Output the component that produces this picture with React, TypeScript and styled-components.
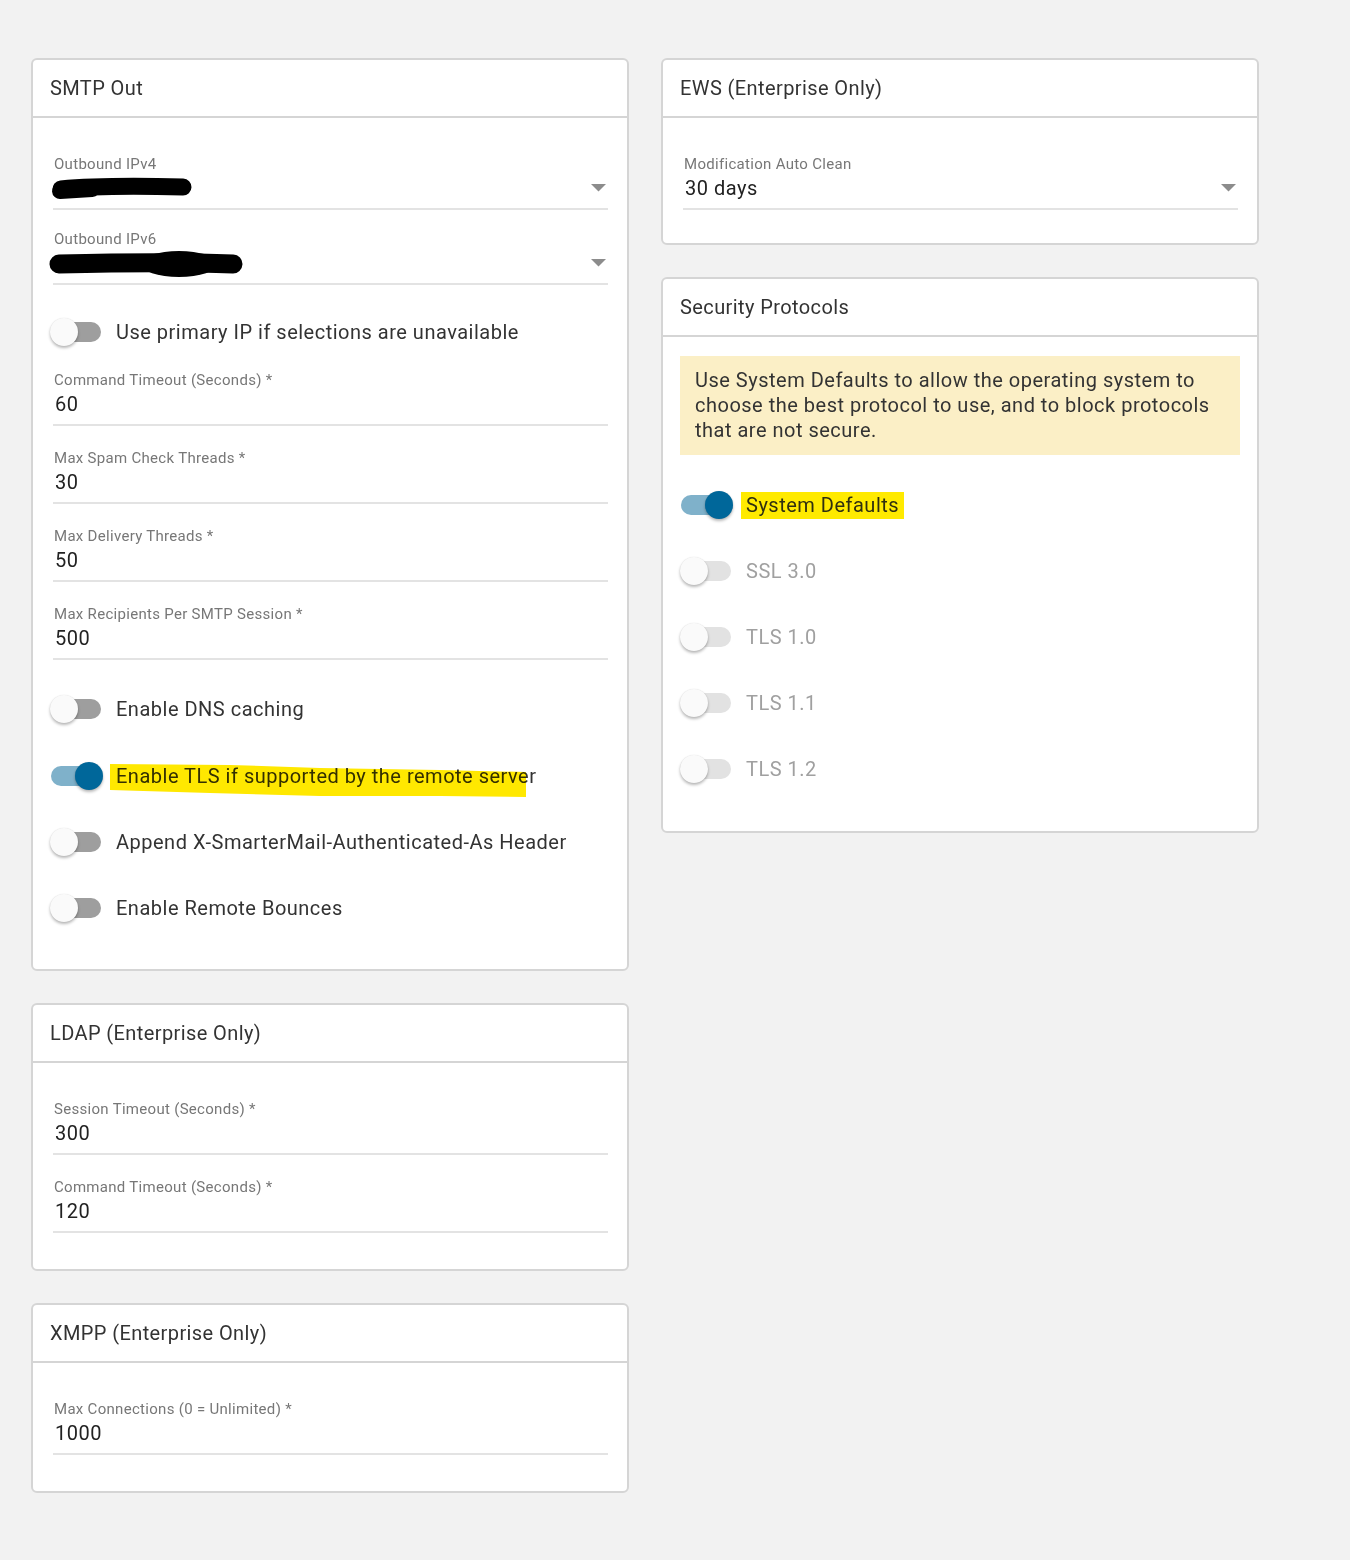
import React from "react";
import styled, { createGlobalStyle } from "styled-components";

const GlobalStyle = createGlobalStyle`
  html, body {
    margin: 0;
    padding: 0;
    background: #f2f2f2;
  }
  body {
    font-family: Roboto, "Noto Sans", "Liberation Sans", sans-serif;
    letter-spacing: 0.5px;
    color: #333;
  }
  * { box-sizing: border-box; }
`;

const Page = styled.div`
  min-height: 1560px;
  display: flex;
  align-items: flex-start;
  gap: 32px;
  padding: 58px 0 0 31px;
`;

const Column = styled.div`
  width: 598px;
  display: flex;
  flex-direction: column;
  gap: 32px;
`;

const Card = styled.section`
  background: #fff;
  border: 2px solid #d5d5d5;
  border-radius: 6px;
  overflow: hidden;
`;

const CardHeader = styled.header`
  height: 58px;
  padding: 0 17px;
  display: flex;
  align-items: center;
  border-bottom: 2px solid #d5d5d5;
  font-size: 20px;
  letter-spacing: 0.4px;
  color: #333;
`;

const CardBody = styled.div<{ $pt?: number; $pb: number }>`
  padding: ${(p) => p.$pt ?? 14}px 17px ${(p) => p.$pb}px;
  display: flex;
  flex-direction: column;
`;

const Field = styled.div<{ $mt: number }>`
  margin: ${(p) => p.$mt}px 2px 0 3px;
  padding-bottom: 7px;
  border-bottom: 2px solid #e3e3e3;
`;

const FieldLabel = styled.div`
  font-size: 15px;
  line-height: 20px;
  letter-spacing: 0.3px;
  color: #777;
  padding-left: 1px;
  padding-top: 1px;
  margin-bottom: -1px;
`;

const FieldValue = styled.div`
  height: 28px;
  font-size: 20px;
  line-height: 28px;
  color: #222;
  padding-left: 2px;
  padding-top: 1px;
  display: flex;
  align-items: center;
  justify-content: space-between;
  position: relative;
`;

const Caret = styled.svg`
  width: 15px;
  height: 8px;
  margin-right: 2px;
  margin-top: 1px;
  fill: #8c8c8c;
  flex-shrink: 0;
`;

const Scribble = styled.svg<{ $left: number; $top: number }>`
  position: absolute;
  left: ${(p) => p.$left}px;
  top: ${(p) => p.$top}px;
  overflow: visible;
`;

const ToggleRow = styled.div<{ $mt: number; $disabled?: boolean }>`
  margin-top: ${(p) => p.$mt}px;
  height: 40px;
  padding-left: 1px;
  display: flex;
  align-items: center;
  font-size: 20px;
  line-height: 28px;
  color: ${(p) => (p.$disabled ? "#a0a0a0" : "#333")};
`;

const Track = styled.span<{ $on?: boolean; $disabled?: boolean }>`
  position: relative;
  width: 50px;
  height: 20px;
  border-radius: 10px;
  flex-shrink: 0;
  background: ${(p) => (p.$on ? "#7fb1ca" : p.$disabled ? "#e2e2e2" : "#9e9e9e")};
  margin-right: 15px;
`;

const Thumb = styled.span<{ $on?: boolean }>`
  position: absolute;
  top: -4px;
  left: ${(p) => (p.$on ? 24 : -1)}px;
  width: 28px;
  height: 28px;
  border-radius: 50%;
  background: ${(p) => (p.$on ? "#00679a" : "#fafafa")};
  box-shadow: 0 2px 3px rgba(0, 0, 0, 0.28), 0 0 1px rgba(0, 0, 0, 0.12);
`;

const Marked = styled.span`
  position: relative;
  display: inline-block;
`;

const MarkerSvg = styled.svg`
  position: absolute;
  left: -6px;
  top: 0;
  overflow: visible;
  mix-blend-mode: multiply;
  pointer-events: none;
`;

const Highlight = styled.span`
  display: inline-block;
  background: #ffea00;
  line-height: 27px;
  padding: 0 5px;
  margin-left: -5px;
  color: #2f2f10;
`;

const InfoBox = styled.div`
  background: #fbefc6;
  padding: 12px 15px;
  font-size: 20px;
  line-height: 25px;
  color: #333;
`;

const CaretIcon = () => (
  <Caret viewBox="0 0 15 8">
    <polygon points="0,0 15,0 7.5,7.5" />
  </Caret>
);

type FieldProps = {
  label: string;
  value?: React.ReactNode;
  mt: number;
  select?: boolean;
};

const TextField = ({ label, value, mt, select }: FieldProps) => (
  <Field $mt={mt}>
    <FieldLabel>{label}</FieldLabel>
    <FieldValue>
      <span>{value}</span>
      {select && <CaretIcon />}
    </FieldValue>
  </Field>
);

type ToggleProps = {
  mt: number;
  on?: boolean;
  disabled?: boolean;
  children: React.ReactNode;
};

const Toggle = ({ mt, on, disabled, children }: ToggleProps) => (
  <ToggleRow $mt={mt} $disabled={disabled}>
    <Track $on={on} $disabled={disabled}>
      <Thumb $on={on} />
    </Track>
    <span>{children}</span>
  </ToggleRow>
);

const ScribbleV4 = () => (
  <Scribble $left={-1} $top={0} width="150" height="30" viewBox="0 0 150 30">
    <path
      d="M9 16 C 40 13, 90 13, 131 14"
      stroke="#000"
      strokeWidth="17"
      strokeLinecap="round"
      fill="none"
    />
    <path d="M8 18 L 40 16" stroke="#000" strokeWidth="16" strokeLinecap="round" fill="none" />
  </Scribble>
);

const ScribbleV6 = () => (
  <Scribble $left={-6} $top={0} width="200" height="32" viewBox="0 0 200 32">
    <path
      d="M12 16 C 60 15, 130 14, 186 16"
      stroke="#000"
      strokeWidth="19"
      strokeLinecap="round"
      fill="none"
    />
    <ellipse cx="132" cy="16" rx="38" ry="13" fill="#000" />
  </Scribble>
);

export default function App() {
  return (
    <>
      <GlobalStyle />
      <Page>
        <Column>
          <Card>
            <CardHeader>SMTP Out</CardHeader>
            <CardBody $pb={41}>
              <TextField label="Outbound IPv4" mt={21} select value={<ScribbleV4 />} />
              <TextField label="Outbound IPv6" mt={18} select value={<ScribbleV6 />} />
              <Toggle mt={27}>Use primary IP if selections are unavailable</Toggle>
              <TextField label="Command Timeout (Seconds) *" mt={17} value="60" />
              <TextField label="Max Spam Check Threads *" mt={21} value="30" />
              <TextField label="Max Delivery Threads *" mt={21} value="50" />
              <TextField label="Max Recipients Per SMTP Session *" mt={21} value="500" />
              <Toggle mt={29}>Enable DNS caching</Toggle>
              <Toggle mt={27} on>
                <Marked>
                  Enable TLS if supported by the remote server
                  <MarkerSvg width="420" height="36" viewBox="0 0 420 36">
                    <polygon
                      points="0,2 120,3 210,6 330,8 416,10 416,35 330,34 210,34 100,31 0,28"
                      fill="#ffe800"
                    />
                  </MarkerSvg>
                </Marked>
              </Toggle>
              <Toggle mt={26}>Append X-SmarterMail-Authenticated-As Header</Toggle>
              <Toggle mt={26}>Enable Remote Bounces</Toggle>
            </CardBody>
          </Card>

          <Card>
            <CardHeader>LDAP (Enterprise Only)</CardHeader>
            <CardBody $pb={36}>
              <TextField label="Session Timeout (Seconds) *" mt={21} value="300" />
              <TextField label="Command Timeout (Seconds) *" mt={21} value="120" />
            </CardBody>
          </Card>

          <Card>
            <CardHeader>XMPP (Enterprise Only)</CardHeader>
            <CardBody $pb={36}>
              <TextField label="Max Connections (0 = Unlimited) *" mt={21} value="1000" />
            </CardBody>
          </Card>
        </Column>

        <Column>
          <Card>
            <CardHeader>EWS (Enterprise Only)</CardHeader>
            <CardBody $pb={33}>
              <TextField label="Modification Auto Clean" mt={21} select value="30 days" />
            </CardBody>
          </Card>

          <Card>
            <CardHeader>Security Protocols</CardHeader>
            <CardBody $pt={19} $pb={42}>
              <InfoBox>
                Use System Defaults to allow the operating system to choose the best protocol to
                use, and to block protocols that are not secure.
              </InfoBox>
              <Toggle mt={30} on>
                <Highlight>System Defaults</Highlight>
              </Toggle>
              <Toggle mt={26} disabled>SSL 3.0</Toggle>
              <Toggle mt={26} disabled>TLS 1.0</Toggle>
              <Toggle mt={26} disabled>TLS 1.1</Toggle>
              <Toggle mt={26} disabled>TLS 1.2</Toggle>
            </CardBody>
          </Card>
        </Column>
      </Page>
    </>
  );
}
